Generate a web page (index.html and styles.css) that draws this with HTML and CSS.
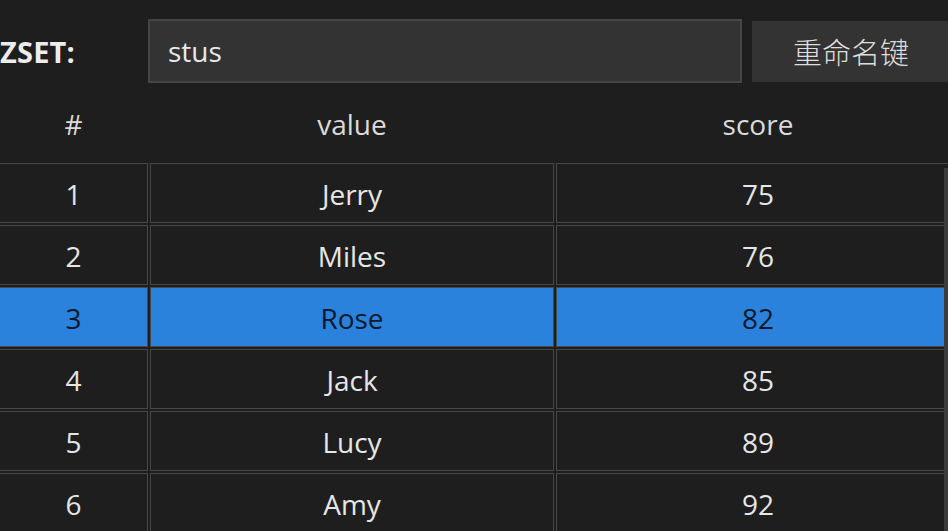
FILE: index.html
```html
<!DOCTYPE html>
<html lang="zh-CN">

<head>
    <title>ZSET</title>
    <meta charset="utf-8">
    <link rel="stylesheet" href="styles.css">
</head>

<body>
    <div class="key-bar">
        <label class="key-type" for="key_name">ZSET:</label>
        <input class="key-name" id="key_name" type="text" value="stus">
        <button class="rename">重命名键</button>
    </div>

    <div class="grid-wrap">
        <table class="members">
            <tr>
                <th class="col-index">#</th>
                <th class="col-value">value</th>
                <th class="col-score">score</th>
            </tr>
            <tr>
                <td>1</td>
                <td>Jerry</td>
                <td>75</td>
            </tr>
            <tr>
                <td>2</td>
                <td>Miles</td>
                <td>76</td>
            </tr>
            <tr class="selected">
                <td>3</td>
                <td>Rose</td>
                <td>82</td>
            </tr>
            <tr>
                <td>4</td>
                <td>Jack</td>
                <td>85</td>
            </tr>
            <tr>
                <td>5</td>
                <td>Lucy</td>
                <td>89</td>
            </tr>
            <tr>
                <td>6</td>
                <td>Amy</td>
                <td>92</td>
            </tr>
        </table>
        <div class="scrollbar"></div>
    </div>
</body>

</html>
```

FILE: styles.css
```css
html,
body {
    background-color: #1e1e1e;
    color: #e4e4e4;
}

body {
    margin: 0;
    padding: 0;
    overflow: hidden;
    font-family: "Open Sans", "Noto Sans CJK SC", sans-serif;
}

.key-bar {
    display: flex;
    align-items: center;
    padding-top: 19px;
    height: 64px;
    white-space: nowrap;
}

.key-type {
    flex: none;
    width: 148px;
    font-size: 29px;
    font-weight: bold;
    letter-spacing: 0.2px;
    color: #ececec;
}

.key-name {
    flex: none;
    box-sizing: border-box;
    width: 594px;
    height: 64px;
    margin: 0;
    padding: 0 0 0 18px;
    background-color: #333333;
    border: 2px solid #464646;
    color: #e8e8e8;
    font-family: "Open Sans", sans-serif;
    font-size: 28px;
    outline: none;
}

.rename {
    flex: none;
    width: 198px;
    height: 61px;
    margin-left: 10px;
    padding: 0;
    background-color: #333333;
    border: none;
    color: #dedede;
    font-family: "Noto Sans CJK SC", sans-serif;
    font-weight: 300;
    font-size: 29px;
}

.grid-wrap {
    position: relative;
}

table {
    border-collapse: separate;
    border-spacing: 2px;
    table-layout: fixed;
    width: 965px;
    margin-left: -3px;
    font-size: 28px;
}

th {
    height: 74px;
    padding: 2px 0 0 0;
    font-weight: normal;
    color: #dadada;
}

.col-index {
    width: 149px;
}

.col-value,
.col-score {
    width: 404px;
}

td {
    box-sizing: border-box;
    height: 60px;
    padding: 2px 0 0 0;
    text-align: center;
    border: 1px solid #474747;
    color: #e6e6e6;
}

.selected td {
    background-color: #2b82dc;
    color: #0c1a2b;
}

.scrollbar {
    position: absolute;
    top: 85px;
    right: 0;
    width: 4px;
    height: 400px;
    background-color: #3b3b3b;
}
```
